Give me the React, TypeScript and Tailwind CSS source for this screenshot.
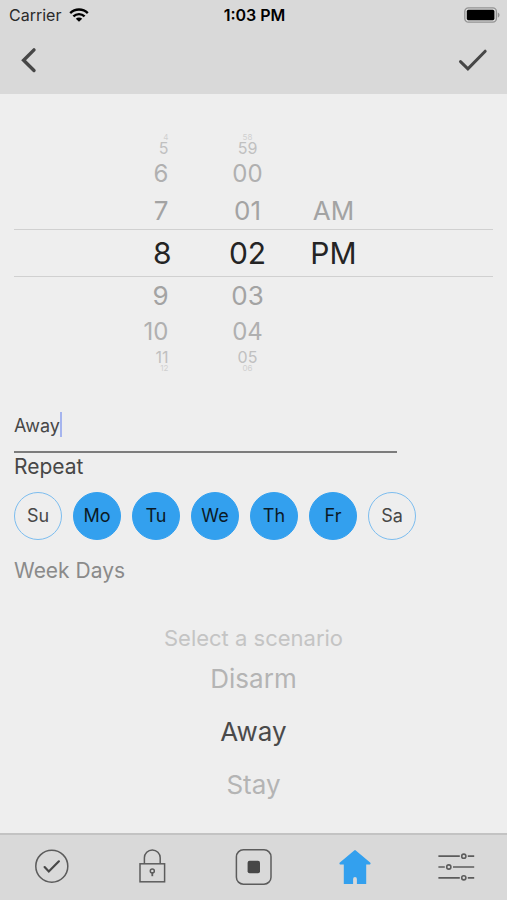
import { useState } from "react";
import type { ReactNode } from "react";
import { clsx } from "clsx";

interface WheelRow {
  hour: string;
  minute: string;
  period?: string;
  className: string;
}

const WHEEL_ROWS: WheelRow[] = [
  { hour: "4", minute: "58", className: "h-[7px] items-center text-[8px] leading-[7px] text-[#d0d0d0]" },
  { hour: "5", minute: "59", className: "h-[15px] items-center text-base leading-[15px] text-[#c0c0c0]" },
  { hour: "6", minute: "00", className: "h-9 items-center text-2xl leading-9 text-[#b0b0b0]" },
  { hour: "7", minute: "01", period: "AM", className: "h-[37px] items-center text-[26px] leading-9 text-[#a3a3a3]" },
  {
    hour: "8",
    minute: "02",
    period: "PM",
    className: "h-12 items-center border-y border-[#d0d0d0] text-[30px] leading-9 text-[#242424]",
  },
  { hour: "9", minute: "03", className: "h-[37px] items-center text-[26px] leading-9 text-[#a3a3a3]" },
  { hour: "10", minute: "04", className: "h-9 items-center text-2xl leading-9 text-[#b0b0b0]" },
  { hour: "11", minute: "05", className: "h-[15px] items-center text-base leading-[15px] text-[#c0c0c0]" },
  { hour: "12", minute: "06", className: "h-[7px] items-center text-[8px] leading-[7px] text-[#d0d0d0]" },
];

const DAYS = ["Su", "Mo", "Tu", "We", "Th", "Fr", "Sa"];

const SCENARIOS = [
  { name: "Select a scenario", className: "h-[30px] text-[22px] text-[#c4c4c4]" },
  { name: "Disarm", className: "h-[53px] text-[26px] text-[#b4b4b4]" },
  { name: "Away", className: "h-[53px] text-[26px] text-[#4a4a4a]" },
  { name: "Stay", className: "h-[53px] text-[26px] text-[#b4b4b4]" },
];

function StatusBar() {
  return (
    <div className="grid h-[30px] grid-cols-3 items-center pr-[7px] pl-[9px] text-base text-black">
      <div className="flex items-center gap-2 text-[#2a2a2a]">
        Carrier
        <svg aria-hidden="true" viewBox="0 0 20 14" className="h-3.5 w-5 text-black">
          <g fill="none" stroke="currentColor" strokeWidth="2.4">
            <path d="M1.2 5.1a12.6 12.6 0 0 1 17.6 0" />
            <path d="M4.4 8.4a8 8 0 0 1 11.2 0" />
          </g>
          <path d="M10 13.8 6.8 10.7a4.6 4.6 0 0 1 6.4 0Z" fill="currentColor" />
        </svg>
      </div>
      <div className="text-center font-semibold">1:03 PM</div>
      <svg aria-hidden="true" viewBox="0 0 36 16" className="h-4 w-9 justify-self-end">
        <rect x="0.8" y="0.8" width="31.6" height="14.4" rx="3.6" fill="none" stroke="#929292" strokeWidth="1.3" />
        <rect x="2.8" y="2.8" width="27.6" height="10.4" rx="1.6" fill="#000" />
        <path d="M33.8 5.4c2.3.8 2.3 4.4 0 5.2Z" fill="#929292" />
      </svg>
    </div>
  );
}

function NavBar() {
  return (
    <div className="flex h-16 items-start justify-between pr-[17px] pl-[14px] pt-4">
      <button type="button" aria-label="Back" className="flex size-7 items-center justify-center text-[#474747]">
        <svg viewBox="0 0 28 28" className="size-7" fill="none" stroke="currentColor" strokeWidth="3.4">
          <path d="M20 3.9 9.6 14.2 20 24.5" strokeLinecap="round" />
        </svg>
      </button>
      <button type="button" aria-label="Save" className="flex h-7 w-9 items-center justify-center text-[#474747]">
        <svg viewBox="0 0 36 28" className="h-7 w-9" fill="none" stroke="currentColor" strokeWidth="3">
          <path d="m6.5 15.6 7.4 7.3L31.2 5.2" strokeLinecap="round" />
        </svg>
      </button>
    </div>
  );
}

function TimeWheel() {
  const [selectedHour, setSelectedHour] = useState("8");

  return (
    <div role="group" aria-label="Time">
      {WHEEL_ROWS.map(row => (
        <div key={row.hour} className={clsx("flex justify-center", row.className)}>
          <button
            type="button"
            aria-pressed={row.hour === selectedHour}
            onClick={() => setSelectedHour(row.hour)}
            className={clsx("w-10 text-right", !row.className.includes("border-y") && "pr-[3px]")}
          >
            {row.hour}
          </button>
          <button type="button" className="ml-8 w-[88px]">
            {row.minute}
          </button>
          <div className="w-[84px] text-center">
            {row.period ? <button type="button">{row.period}</button> : null}
          </div>
        </div>
      ))}
    </div>
  );
}

function DayPicker() {
  const [active, setActive] = useState(["Mo", "Tu", "We", "Th", "Fr"]);

  const toggle = (day: string) =>
    setActive(days => (days.includes(day) ? days.filter(item => item !== day) : [...days, day]));

  return (
    <div className="mt-[11px] flex gap-[11px]">
      {DAYS.map(day => (
        <button
          key={day}
          type="button"
          aria-pressed={active.includes(day)}
          onClick={() => toggle(day)}
          className={clsx(
            "size-12 rounded-full border text-lg",
            active.includes(day)
              ? "border-[#33a0ee] bg-[#33a0ee] text-[#0b1a26]"
              : "border-[#7cbdee] text-[#474747]"
          )}
        >
          {day}
        </button>
      ))}
    </div>
  );
}

function TabButton({ label, active, children }: { label: string; active?: boolean; children: ReactNode }) {
  return (
    <button
      type="button"
      aria-label={label}
      aria-current={active ? "page" : undefined}
      className={clsx("flex items-center justify-center", active ? "text-[#33a0ee]" : "text-[#5c5c5c]")}
    >
      <svg viewBox="0 0 40 40" className="size-10" fill="none" stroke="currentColor" strokeWidth="1.5">
        {children}
      </svg>
    </button>
  );
}

function TabBar() {
  return (
    <nav className="grid h-[67px] grid-cols-5 border-t-2 border-[#c3c3c3] bg-[#d9d9d9]">
      <TabButton label="Status">
        <circle cx="20.8" cy="18.2" r="16" />
        <path d="m13.6 19.1 4.2 4.4 10.1-10.2" stroke="#474747" strokeWidth="2.2" strokeLinecap="round" />
      </TabButton>
      <TabButton label="Locks">
        <rect x="8" y="15.8" width="24.6" height="18" />
        <path d="M12.4 15.8V9.8a7.9 7.9 0 0 1 15.8 0v6" />
        <circle cx="20.3" cy="23" r="2" />
        <path d="M20.3 24v4.2" strokeWidth="1.8" />
      </TabButton>
      <TabButton label="Record">
        <rect x="3.4" y="1.8" width="34.6" height="34.4" rx="7" />
        <rect x="14.6" y="12.8" width="12.4" height="12.4" rx="2" fill="#474747" stroke="none" />
      </TabButton>
      <TabButton label="Home" active>
        <path
          d="M19.2 2.4q.8-.8 1.6 0l14.6 12.4q.6 1.2-.4 1.6H31.2V36H21.9v-5a1.9 1.9 0 0 0-3.8 0v5H8.8V16.4H5q-1-.4-.4-1.6Z"
          fill="currentColor"
          stroke="none"
        />
      </TabButton>
      <TabButton label="Settings">
        <path d="M2.4 8.2h21.4M31.8 8.2h6.4M2.4 19h6.4M17 19h21.2M2.4 29.8h21.4M31.8 29.8h6.4" strokeWidth="1.7" />
        <g strokeWidth="1.6">
          <circle cx="27.8" cy="8.2" r="2.1" />
          <circle cx="12.8" cy="19" r="2.1" />
          <circle cx="27.8" cy="29.8" r="2.1" />
        </g>
      </TabButton>
    </nav>
  );
}

export default function App() {
  const [name, setName] = useState("Away");

  return (
    <div className="flex min-h-screen flex-col bg-[#eeeeee] font-['Inter',sans-serif] text-[#474747]">
      <header className="bg-[#d9d9d9]">
        <StatusBar />
        <NavBar />
      </header>
      <main className="flex-1 px-[14px] pt-10">
        <TimeWheel />
        <div className="mt-9 flex h-[45px] w-4/5 items-start border-b-2 border-[#7c7c7c]">
          <input
            type="text"
            aria-label="Schedule name"
            value={name}
            onChange={event => setName(event.target.value)}
            className="h-[34px] bg-transparent text-lg outline-none [field-sizing:content]"
          />
          <span aria-hidden="true" className="mt-1 h-[25px] w-0.5 bg-[#a5b4ee]" />
        </div>
        <h2 className="text-[21px] leading-7">Repeat</h2>
        <DayPicker />
        <p className="mt-[17px] text-[21px] leading-7 text-[#8a8a8a]">Week Days</p>
        <div role="group" aria-label="Scenario" className="mt-[37px] flex flex-col items-center">
          {SCENARIOS.map(scenario => (
            <button key={scenario.name} type="button" className={scenario.className}>
              {scenario.name}
            </button>
          ))}
        </div>
      </main>
      <TabBar />
    </div>
  );
}
